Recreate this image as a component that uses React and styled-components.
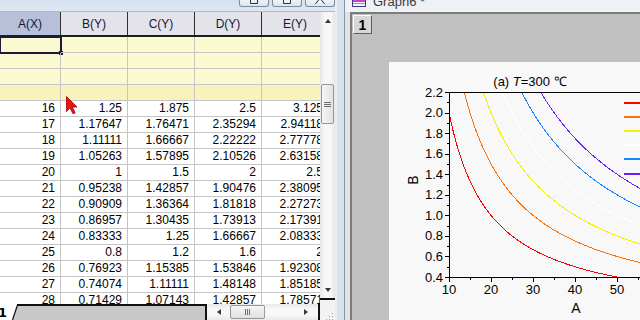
import React from 'react';
import styled, { createGlobalStyle, css } from 'styled-components';

const GlobalStyle = createGlobalStyle`
  html, body { margin: 0; padding: 0; overflow: hidden; background: #c0c0c0; }
  #root { width: 640px; height: 320px; }
`;

const COLS = '61px 67px 67px 67px 67px';

const Screen = styled.div`
  width: 640px;
  height: 320px;
  display: flex;
  overflow: hidden;
  font-family: "Liberation Sans", Arial, sans-serif;
`;

/* ---------- workbook window ---------- */
const Workbook = styled.div`
  flex: none;
  width: 335px;
  display: flex;
  flex-direction: column;
  background: #fff;
`;

const WbTitle = styled.div`
  flex: none;
  height: 12px;
  box-sizing: border-box;
  background: linear-gradient(#d5e1ee, #dde7f2);
  border-bottom: 1px solid #aebdcd;
  display: flex;
  justify-content: flex-end;
  align-items: flex-start;
  gap: 3px;
`;

const TitleBtn = styled.div`
  width: 30px;
  height: 7px;
  box-sizing: border-box;
  border: 1px solid #7d8ca0;
  border-top: none;
  border-radius: 0 0 3px 3px;
  background: linear-gradient(#eef3f8, #dbe3ec);
  display: flex;
  justify-content: center;
  align-items: flex-start;
`;

const SheetArea = styled.div`
  flex: 1;
  min-height: 0;
  display: flex;
`;

const LeftCol = styled.div`
  flex: none;
  width: 320px;
  display: flex;
  flex-direction: column;
  overflow: hidden;
`;

const Grid = styled.div`
  flex: 1;
  min-height: 0;
  overflow: hidden;
  position: relative;
  background: #fff;
`;

const HeaderRow = styled.div`
  display: grid;
  grid-template-columns: ${COLS};
  height: 25px;
  box-sizing: border-box;
  border-bottom: 2px solid #1e1e1e;
`;

const HeaderCell = styled.div`
  border-right: 1px solid #2e2e2e;
  background: ${p => (p.$selected ? '#b8bfd8' : '#e4e3e9')};
  display: flex;
  align-items: center;
  justify-content: center;
  font-size: 12px;
  color: #16163a;
  white-space: nowrap;
`;

const Row = styled.div`
  display: grid;
  grid-template-columns: ${COLS};
  height: 16px;
  background: ${p =>
    p.$tone === 'label' ? '#fbf9cf' : p.$tone === 'formula' ? '#f7f3bb' : '#ffffff'};
`;

const Cell = styled.div`
  position: relative;
  box-sizing: border-box;
  height: 16px;
  border-right: 1px solid #c5c5c5;
  border-bottom: 1px solid #c5c5c5;
  padding-right: 5px;
  text-align: right;
  font-size: 12px;
  line-height: 15px;
  color: #000;
  white-space: nowrap;
  ${p =>
    p.$active &&
    css`
      outline: 2px solid #1c1c38;
      outline-offset: -1px;
      &::after {
        content: '';
        position: absolute;
        right: -3px;
        bottom: -3px;
        width: 4px;
        height: 4px;
        background: #1c1c38;
      }
    `}
`;

const Cursor = styled.svg`
  position: absolute;
  left: 66px;
  top: 84px;
`;

const RightCol = styled.div`
  flex: none;
  width: 15px;
  display: flex;
  flex-direction: column;
`;

const VScroll = styled.div`
  flex: 1;
  min-height: 0;
  display: flex;
  flex-direction: column;
  background: linear-gradient(90deg, #e6e6e6, #f7f7f7 30%, #f7f7f7 70%, #e6e6e6);
`;

const ScrollArrow = styled.div`
  flex: none;
  width: ${p => (p.$h ? '15px' : 'auto')};
  height: ${p => (p.$h ? 'auto' : '17px')};
  align-self: stretch;
  display: flex;
  align-items: center;
  justify-content: center;
`;

const triangles = {
  up: 'border-left: 3.5px solid transparent; border-right: 3.5px solid transparent; border-bottom: 4px solid #3a3a3a;',
  down: 'border-left: 3.5px solid transparent; border-right: 3.5px solid transparent; border-top: 4px solid #3a3a3a;',
  left: 'border-top: 3.5px solid transparent; border-bottom: 3.5px solid transparent; border-right: 4px solid #3a3a3a;',
  right: 'border-top: 3.5px solid transparent; border-bottom: 3.5px solid transparent; border-left: 4px solid #3a3a3a;',
};

const Tri = styled.span`
  width: 0;
  height: 0;
  ${p => triangles[p.$dir]}
`;

const VThumb = styled.div`
  flex: none;
  margin: 55px 1px 0;
  height: 40px;
  box-sizing: border-box;
  border: 1px solid #979797;
  border-radius: 2px;
  background: linear-gradient(90deg, #f6f6f6, #e2e2e2);
  display: flex;
  flex-direction: column;
  align-items: center;
  justify-content: center;
  gap: 1px;
`;

const HThumb = styled.div`
  flex: none;
  margin-left: 4px;
  width: 35px;
  height: 14px;
  box-sizing: border-box;
  border: 1px solid #979797;
  border-radius: 2px;
  background: linear-gradient(#f6f6f6, #e0e0e0);
  display: flex;
  align-items: center;
  justify-content: center;
  gap: 1px;
`;

const Grip = styled.span`
  background: #6d6d6d;
  width: ${p => (p.$h ? '1px' : '7px')};
  height: ${p => (p.$h ? '6px' : '1px')};
`;

const Spacer = styled.div`
  flex: 1;
`;

const Corner = styled.div`
  flex: none;
  height: 22px;
  margin-left: -2px;
  box-sizing: border-box;
  border-top: 2px solid #111;
  border-left: 2px solid #111;
  background: #f2f2f2;
  display: flex;
  align-items: flex-end;
  justify-content: flex-end;
`;

const BottomBar = styled.div`
  flex: none;
  height: 16px;
  display: flex;
  background: #fff;
`;

const SheetTabs = styled.div`
  flex: none;
  width: 207px;
  display: flex;
`;

const ActiveTab = styled.div`
  flex: none;
  width: 12px;
  box-sizing: border-box;
  padding-top: 2px;
  font-family: "DejaVu Sans", sans-serif;
  font-weight: bold;
  font-size: 13px;
  line-height: 14px;
  color: #000;
  overflow: hidden;
  & > span { margin-left: -2px; }
`;

const TabStrip = styled.div`
  flex: 1;
  box-sizing: border-box;
  background: #c8c8c8;
  border-top: 2px solid #111;
  border-right: 2px solid #111;
`;

const HScroll = styled.div`
  flex: 1;
  display: flex;
  align-items: center;
  padding: 0 7px 0 4px;
  background: linear-gradient(#e8e8e8, #f7f7f7 30%, #f7f7f7 70%, #e8e8e8);
`;

const Divider = styled.div`
  flex: none;
  width: 10px;
  box-sizing: border-box;
  border-left: 2px solid #ececec;
  border-right: 1px solid #8b939d;
  background: #d6e3f2;
`;

/* ---------- graph window ---------- */
const GraphWin = styled.div`
  flex: 1;
  min-width: 0;
  display: flex;
  flex-direction: column;
  padding-left: 5px;
  background: #e2e2e2;
`;

const GraphTitle = styled.div`
  flex: none;
  height: 12px;
  margin-left: -5px;
  padding-left: 5px;
  background: #eef1f5;
  display: flex;
  align-items: flex-start;
  overflow: hidden;
`;

const GraphIcon = styled.svg`
  flex: none;
  margin-left: 2px;
`;

const GraphCaption = styled.div`
  margin-left: 7px;
  margin-top: -5px;
  font-size: 13px;
  line-height: 14px;
  color: #3b3b3b;
  white-space: nowrap;
`;

const GraphFrame = styled.div`
  flex: 1;
  min-height: 0;
  display: flex;
  align-items: flex-start;
  border-top: 2px solid #7c7c7c;
  border-left: 2px solid #7c7c7c;
  background: #c0c0c0;
  overflow: hidden;
`;

const LayerBtn = styled.div`
  flex: none;
  margin: 1px 0 0 1px;
  width: 19px;
  height: 19px;
  box-sizing: border-box;
  background: #d7d7d7;
  border: 1px solid;
  border-color: #ffffff #5e5e5e #5e5e5e #ffffff;
  display: flex;
  align-items: center;
  justify-content: center;
  font-size: 14px;
  font-weight: bold;
  color: #000;
`;

const Page = styled.div`
  flex: none;
  margin: 48px 0 0 17px;
  width: 260px;
  height: 258px;
  background: #f8f8f8;
`;

const Plot = styled.svg`
  display: block;
  font-family: "Liberation Sans", Arial, sans-serif;
`;

/* ---------- data ---------- */
const fmt = v => v.toFixed(5).replace(/0+$/, '').replace(/\.$/, '');
const HEADERS = ['A(X)', 'B(Y)', 'C(Y)', 'D(Y)', 'E(Y)'];
const LABEL_ROWS = ['label', 'label', 'label', 'formula'];
const DATA = Array.from({ length: 13 }, (_, i) => {
  const n = 16 + i;
  return [n, 20 / n, 30 / n, 40 / n, 50 / n].map(fmt);
});

const X0 = 60;
const XS = 4.2;
const YT = 30;
const YB = 215;
const YS = 185 / 1.8;
const px = a => X0 + (a - 10) * XS;
const py = b => YB - (b - 0.4) * YS;

const CURVES = [
  [20, '#ff0000'],
  [30, '#ff7000'],
  [40, '#f4ee00'],
  [50, '#ffffff'],
  [60, '#1a84ff'],
  [70, '#6a1eff'],
];

const curvePoints = k => {
  const pts = [];
  for (let a = 8; a <= 66; a += 0.25) pts.push(`${px(a).toFixed(2)},${py(k / a).toFixed(2)}`);
  return pts.join(' ');
};

const Y_MAJOR = [0.4, 0.6, 0.8, 1.0, 1.2, 1.4, 1.6, 1.8, 2.0, 2.2];
const Y_MINOR = [0.5, 0.7, 0.9, 1.1, 1.3, 1.5, 1.7, 1.9, 2.1];
const X_MAJOR = [10, 20, 30, 40, 50, 60];
const X_MINOR = [15, 25, 35, 45, 55];

function Chart() {
  return (
    <Plot width="260" height="258" viewBox="0 0 260 258">
      <defs>
        <clipPath id="plotArea">
          <rect x={X0} y={YT} width={260 - X0} height={YB - YT} />
        </clipPath>
      </defs>
      <text x="141" y="24" fontSize="13" textAnchor="middle" fill="#000">
        (a) <tspan fontStyle="italic">T</tspan>=300 ℃
      </text>
      <g clipPath="url(#plotArea)" fill="none" strokeWidth="1" shapeRendering="crispEdges">
        {CURVES.map(([k, c]) => (
          <polyline key={k} points={curvePoints(k)} stroke={c} />
        ))}
      </g>
      <g stroke="#000" strokeWidth="1" shapeRendering="crispEdges">
        <line x1={X0 + 0.5} y1={YT} x2={X0 + 0.5} y2={YB + 1} />
        <line x1={X0} y1={YB + 0.5} x2="260" y2={YB + 0.5} />
        <line x1={X0} y1={YT + 0.5} x2="260" y2={YT + 0.5} />
        {Y_MAJOR.map(b => {
          const y = Math.round(py(b)) + 0.5;
          return <line key={b} x1={X0 - 4} y1={y} x2={X0} y2={y} />;
        })}
        {Y_MINOR.map(b => {
          const y = Math.round(py(b)) + 0.5;
          return <line key={b} x1={X0 - 2} y1={y} x2={X0} y2={y} />;
        })}
        {X_MAJOR.map(a => {
          const x = Math.round(px(a)) + 0.5;
          return <line key={a} x1={x} y1={YB} x2={x} y2={YB + 5} />;
        })}
        {X_MINOR.map(a => {
          const x = Math.round(px(a)) + 0.5;
          return <line key={a} x1={x} y1={YB} x2={x} y2={YB + 3} />;
        })}
      </g>
      <g fontSize="13" fill="#000">
        {Y_MAJOR.map(b => (
          <text key={b} x="54" y={py(b) + 4.6} textAnchor="end">
            {b.toFixed(1)}
          </text>
        ))}
        {X_MAJOR.map(a => (
          <text key={a} x={px(a)} y="232" textAnchor="middle">
            {a}
          </text>
        ))}
      </g>
      <text x="187" y="251" fontSize="14" textAnchor="middle" fill="#000">A</text>
      <text x="29" y="118" fontSize="14" textAnchor="middle" fill="#000" transform="rotate(-90 29 118)">B</text>
      <g strokeWidth="2" shapeRendering="crispEdges">
        {CURVES.map(([k, c], i) => {
          const y = Math.round(41 + 14.1 * i);
          return <line key={k} x1="235" y1={y} x2="260" y2={y} stroke={c} />;
        })}
      </g>
    </Plot>
  );
}

export default function App() {
  return (
    <>
      <GlobalStyle />
      <Screen>
        <Workbook>
          <WbTitle>
            <TitleBtn>
              <svg width="10" height="5"><path d="M1.5 0V3.5H8.5V0" stroke="#333" fill="none" /></svg>
            </TitleBtn>
            <TitleBtn>
              <svg width="10" height="5"><path d="M1.5 0V3.5H8.5V0" stroke="#333" fill="none" /></svg>
            </TitleBtn>
            <TitleBtn>
              <svg width="12" height="5"><path d="M4.5 0L1.5 4M7.5 0L10.5 4" stroke="#333" fill="none" /></svg>
            </TitleBtn>
          </WbTitle>
          <SheetArea>
            <LeftCol>
              <Grid>
                <HeaderRow>
                  {HEADERS.map((h, i) => (
                    <HeaderCell key={h} $selected={i === 0}>{h}</HeaderCell>
                  ))}
                </HeaderRow>
                {LABEL_ROWS.map((tone, r) => (
                  <Row key={`l${r}`} $tone={tone}>
                    {HEADERS.map((h, c) => (
                      <Cell key={h} $active={r === 0 && c === 0} />
                    ))}
                  </Row>
                ))}
                {DATA.map((vals, r) => (
                  <Row key={`d${r}`}>
                    {vals.map((v, c) => (
                      <Cell key={c}>{v}</Cell>
                    ))}
                  </Row>
                ))}
                <Cursor width="13" height="19" viewBox="0 0 13 19">
                  <path d="M0.5 0.5L0.5 15.5L4 12L7 17.8L9.2 16.8L6.3 11L11 11Z" fill="#ee1111" stroke="#a00000" strokeWidth="0.8" />
                </Cursor>
              </Grid>
              <BottomBar>
                <SheetTabs>
                  <ActiveTab><span>1</span></ActiveTab>
                  <svg width="6" height="16">
                    <polygon points="0.5,16 5.5,1 6,1 6,16" fill="#c8c8c8" />
                    <line x1="0.5" y1="16" x2="5.5" y2="1" stroke="#111" strokeWidth="1.2" />
                    <rect x="5" y="0" width="1" height="2" fill="#111" />
                  </svg>
                  <TabStrip />
                </SheetTabs>
                <HScroll>
                  <ScrollArrow $h><Tri $dir="left" /></ScrollArrow>
                  <HThumb>
                    <Grip $h /><Grip $h /><Grip $h />
                  </HThumb>
                  <Spacer />
                  <ScrollArrow $h><Tri $dir="right" /></ScrollArrow>
                </HScroll>
              </BottomBar>
            </LeftCol>
            <RightCol>
              <VScroll>
                <ScrollArrow><Tri $dir="up" /></ScrollArrow>
                <VThumb>
                  <Grip /><Grip /><Grip />
                </VThumb>
                <Spacer />
                <ScrollArrow><Tri $dir="down" /></ScrollArrow>
              </VScroll>
              <Corner>
                <svg width="10" height="8">
                  <g fill="#a0a0a0">
                    <rect x="7" y="1" width="1" height="1" />
                    <rect x="4" y="4" width="1" height="1" />
                    <rect x="7" y="4" width="1" height="1" />
                    <rect x="1" y="7" width="1" height="1" />
                    <rect x="4" y="7" width="1" height="1" />
                    <rect x="7" y="7" width="1" height="1" />
                  </g>
                </svg>
              </Corner>
            </RightCol>
          </SheetArea>
        </Workbook>
        <Divider />
        <GraphWin>
          <GraphTitle>
            <GraphIcon width="14" height="7" viewBox="0 0 14 7">
              <rect x="0.5" y="-5" width="13" height="11.5" fill="#f4f4ff" stroke="#3c3c8c" />
              <rect x="1" y="0" width="12" height="2" fill="#d040c0" />
              <rect x="1" y="3" width="12" height="1" fill="#30c0d0" />
            </GraphIcon>
            <GraphCaption>Graph6 *</GraphCaption>
          </GraphTitle>
          <GraphFrame>
            <LayerBtn>1</LayerBtn>
            <Page>
              <Chart />
            </Page>
          </GraphFrame>
        </GraphWin>
      </Screen>
    </>
  );
}
